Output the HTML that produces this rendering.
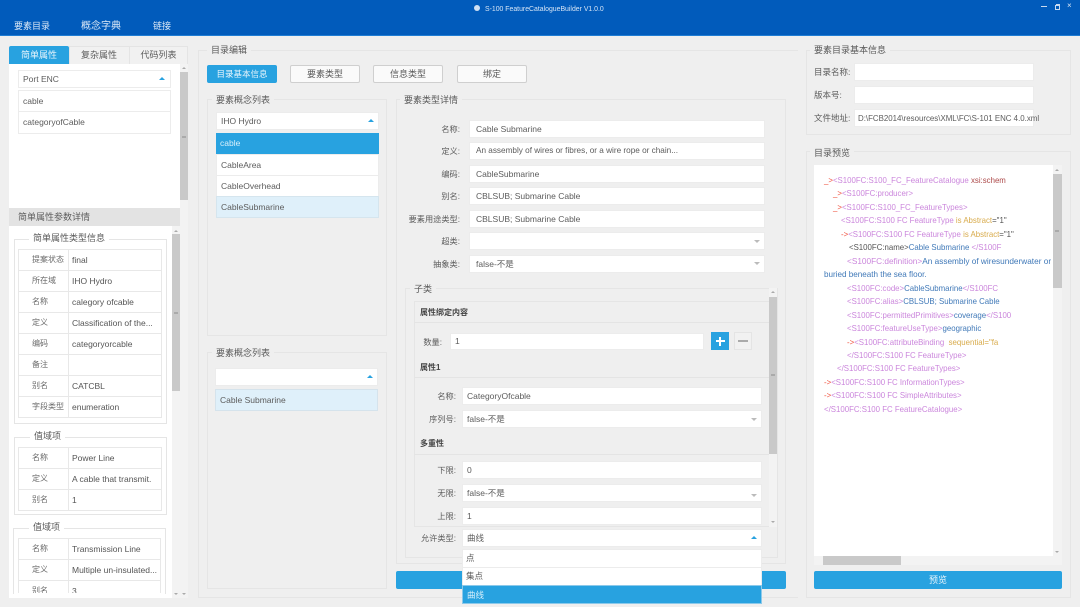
<!DOCTYPE html>
<html><head><meta charset="utf-8"><style>
html,body{margin:0;padding:0}
body{width:1080px;height:607px;overflow:hidden;background:#efefef}
#r{position:relative;width:1080px;height:607px;overflow:hidden;background:#efefef;font:8.5px/1 "Liberation Sans","Noto Sans CJK SC",sans-serif;color:#5c5c5c;filter:blur(.35px)}
#r div,#r span.a{position:absolute;box-sizing:border-box;white-space:nowrap}
.f{border:1px solid #e5e5e5}
.l{background:#efefef;padding:0 4px;height:10px;line-height:10px;font-size:9px;color:#5a5a5a}
.w{background:#fff}
.i{background:#fff;border:1px solid #ececec;padding-left:6px;color:#5c5c5c}
.t{text-align:right;color:#5c5c5c;font-size:8.2px;padding-top:1px}
.b{background:#28a2e0;color:#e8f5fc;text-align:center;border-radius:2px;font-size:9px}
.o{background:#fafafa;border:1px solid #cfcfcf;text-align:center;border-radius:2px;font-size:9px;color:#5a5a5a}
.u{width:0;height:0;border-left:3px solid transparent;border-right:3px solid transparent;border-bottom:3px solid #28a2e0}
.d{width:0;height:0;border-left:3px solid transparent;border-right:3px solid transparent;border-top:3px solid #bbb}
.su{width:0;height:0;border-left:2px solid transparent;border-right:2px solid transparent;border-bottom:2px solid #aaa}
.sd{width:0;height:0;border-left:2px solid transparent;border-right:2px solid transparent;border-top:2px solid #aaa}
.tr{background:#f3f3f3}.th{background:#c9c9c9}
.g{background:#aaa;height:2px;width:4px}
.h{color:#444;background:transparent;font-size:8px;font-weight:bold}
.hr{background:#e4e4e4;height:1px}
table{position:absolute;border-collapse:collapse;table-layout:fixed;background:#fff;font-size:8.5px;color:#5c5c5c}
td{border:1px solid #e8e8e8;padding:0;height:20px;white-space:nowrap;overflow:hidden}
td:first-child{width:50px;text-align:left;padding-left:13px;box-sizing:border-box;color:#6a6a6a;font-size:8px}
td:last-child{padding-left:3px;color:#555}
.x{left:0;height:13px;line-height:13px;font-size:7.85px}
.p{color:#cb86dc}.r{color:#f0503c}.y{color:#d8ab4c}.c{color:#4079b8}.k{color:#555}.m{color:#ad4a4a}
</style></head><body><div id="r">

<!-- header -->
<div style="left:0;top:0;width:1080px;height:36px;background:#015bbb;border-bottom:1px solid #1f7dd4"></div>
<div style="left:474px;top:5px;width:6px;height:6px;border-radius:50%;background:#cfe0f3"></div>
<div style="left:485px;top:5px;height:9px;line-height:9px;font-size:6.9px;color:#d6e5f6">S-100 FeatureCatalogueBuilder V1.0.0</div>
<div style="left:14px;top:21px;height:11px;line-height:11px;font-size:9px;color:#dbe8f6">要素目录</div>
<div style="left:81px;top:21px;height:11px;line-height:11px;font-size:10px;color:#dbe8f6">概念字典</div>
<div style="left:153px;top:21px;height:11px;line-height:11px;font-size:9px;color:#dbe8f6">链接</div>
<div style="left:1041px;top:6px;width:6px;height:1px;background:#c8daf0"></div>
<div style="left:1056px;top:4px;width:4px;height:4px;border:1px solid #c8daf0"></div>
<div style="left:1055px;top:5px;width:5px;height:5px;border:1px solid #c8daf0;background:#015bbb"></div>
<div style="left:1067px;top:2px;height:8px;line-height:8px;font-size:8px;color:#d5e4f5">×</div>

<!-- left tabs -->
<div style="left:69px;top:46px;width:119px;height:18px;border:1px solid #e4e4e4;border-bottom:0;background:#f1f1f1"></div>
<div style="left:129px;top:46px;width:1px;height:18px;background:#e4e4e4"></div>
<div class="b" style="left:9px;top:46px;width:60px;height:18px;line-height:18px;border-radius:2px 2px 0 0">简单属性</div>
<div style="left:69px;top:46px;width:60px;height:18px;line-height:18px;text-align:center;font-size:9px">复杂属性</div>
<div style="left:129px;top:46px;width:59px;height:18px;line-height:18px;text-align:center;font-size:9px">代码列表</div>

<div class="w" style="left:9px;top:64px;width:171px;height:144px"></div>
<div class="tr" style="left:180px;top:64px;width:8px;height:534px"></div>
<div class="su" style="left:182px;top:67px"></div>
<div class="th" style="left:180px;top:72px;width:8px;height:128px"></div>
<div class="g" style="left:182px;top:136px"></div>
<div class="i" style="left:18px;top:70px;width:153px;height:18px;line-height:16px;padding-left:4px">Port ENC</div>
<div class="u" style="left:159px;top:77px"></div>
<div class="i" style="left:18px;top:90px;width:153px;height:22px;line-height:20px;padding-left:4px">cable</div>
<div class="i" style="left:18px;top:111px;width:153px;height:23px;line-height:21px;padding-left:4px">categoryofCable</div>

<div style="left:9px;top:208px;width:171px;height:18px;line-height:18px;background:#e3e3e3;padding-left:9px;font-size:9px">简单属性参数详情</div>
<div class="w" style="left:9px;top:226px;width:163px;height:372px"></div>
<div class="tr" style="left:172px;top:226px;width:8px;height:372px"></div>
<div class="su" style="left:174px;top:230px"></div>
<div class="th" style="left:172px;top:234px;width:8px;height:157px"></div>
<div class="g" style="left:174px;top:312px"></div>
<div class="sd" style="left:174px;top:593px"></div>
<div class="sd" style="left:182px;top:593px"></div>

<div class="f" style="left:14px;top:239px;width:153px;height:185px"></div>
<div class="l" style="left:29px;top:233px;background:#fff">简单属性类型信息</div>
<table style="left:18px;top:249px;width:144px">
<tr><td>提案状态</td><td>final</td></tr>
<tr><td>所在域</td><td>IHO Hydro</td></tr>
<tr><td>名称</td><td>calegory ofcable</td></tr>
<tr><td>定义</td><td>Classification of the...</td></tr>
<tr><td>编码</td><td>categoryorcable</td></tr>
<tr><td>备注</td><td></td></tr>
<tr><td>别名</td><td>CATCBL</td></tr>
<tr><td>字段类型</td><td>enumeration</td></tr>
</table>

<div class="f" style="left:14px;top:437px;width:153px;height:78px"></div>
<div class="l" style="left:30px;top:431px;background:#fff">值域项</div>
<table style="left:18px;top:447px;width:144px">
<tr><td>名称</td><td>Power Line</td></tr>
<tr><td>定义</td><td>A cable that transmit.</td></tr>
<tr><td>别名</td><td>1</td></tr>
</table>

<div class="f" style="left:13px;top:528px;width:153px;height:66px;border-bottom:0"></div>
<div class="l" style="left:29px;top:522px;background:#fff">值域项</div>
<div style="left:13px;top:538px;width:150px;height:55px;overflow:hidden">
<table style="left:5px;top:0;width:143px">
<tr><td>名称</td><td>Transmission Line</td></tr>
<tr><td>定义</td><td>Multiple un-insulated...</td></tr>
<tr><td>别名</td><td>3</td></tr>
</table></div>

<!-- middle -->
<div class="f" style="left:198px;top:50px;width:600px;height:548px;border-right:0"></div>
<div class="l" style="left:207px;top:45px">目录编辑</div>
<div class="b" style="left:207px;top:65px;width:70px;height:18px;line-height:18px;font-size:8.5px">目录基本信息</div>
<div class="o" style="left:290px;top:65px;width:70px;height:18px;line-height:16px">要素类型</div>
<div class="o" style="left:373px;top:65px;width:70px;height:18px;line-height:16px">信息类型</div>
<div class="o" style="left:457px;top:65px;width:70px;height:18px;line-height:16px">绑定</div>

<div class="f" style="left:207px;top:99px;width:180px;height:237px"></div>
<div class="l" style="left:212px;top:95px">要素概念列表</div>
<div class="i" style="left:216px;top:112px;width:163px;height:18px;line-height:16px;padding-left:4px">IHO Hydro</div>
<div class="u" style="left:368px;top:119px"></div>
<div style="left:216px;top:133px;width:163px;height:21px;line-height:21px;background:#28a2e0;color:#d9f0fb;padding-left:4px">cable</div>
<div class="i" style="left:216px;top:154px;width:163px;height:22px;line-height:20px;padding-left:4px">CableArea</div>
<div class="i" style="left:216px;top:175px;width:163px;height:22px;line-height:20px;padding-left:4px">CableOverhead</div>
<div class="i" style="left:216px;top:196px;width:163px;height:22px;line-height:20px;padding-left:4px;background:#dff0fa;border-color:#d5e5ee">CableSubmarine</div>

<div class="f" style="left:207px;top:352px;width:180px;height:237px"></div>
<div class="l" style="left:212px;top:348px">要素概念列表</div>
<div class="i" style="left:215px;top:368px;width:163px;height:18px"></div>
<div class="u" style="left:367px;top:375px"></div>
<div class="i" style="left:215px;top:389px;width:163px;height:22px;line-height:20px;padding-left:4px;background:#dff0fa;border-color:#d5e3ec">Cable Submarine</div>

<div class="f" style="left:396px;top:99px;width:390px;height:465px"></div>
<div class="l" style="left:400px;top:95px">要素类型详情</div>
<div class="t" style="left:400px;top:120px;width:60px;height:18px;line-height:18px">名称:</div>
<div class="i" style="left:469px;top:120px;width:296px;height:18px;line-height:16px">Cable Submarine</div>
<div class="t" style="left:400px;top:142px;width:60px;height:18px;line-height:18px">定义:</div>
<div class="i" style="left:469px;top:142px;width:296px;height:18px;line-height:16px;font-size:8.2px">An assembly of wires or fibres, or a wire rope or chain...</div>
<div class="t" style="left:400px;top:165px;width:60px;height:18px;line-height:18px">编码:</div>
<div class="i" style="left:469px;top:165px;width:296px;height:18px;line-height:16px">CableSubmarine</div>
<div class="t" style="left:400px;top:187px;width:60px;height:18px;line-height:18px">别名:</div>
<div class="i" style="left:469px;top:187px;width:296px;height:18px;line-height:16px">CBLSUB; Submarine Cable</div>
<div class="t" style="left:400px;top:210px;width:60px;height:18px;line-height:18px">要素用途类型:</div>
<div class="i" style="left:469px;top:210px;width:296px;height:18px;line-height:16px">CBLSUB; Submarine Cable</div>
<div class="t" style="left:400px;top:232px;width:60px;height:18px;line-height:18px">超类:</div>
<div class="i" style="left:469px;top:232px;width:296px;height:18px"></div>
<div class="d" style="left:754px;top:240px"></div>
<div class="t" style="left:400px;top:255px;width:60px;height:18px;line-height:18px">抽象类:</div>
<div class="i" style="left:469px;top:255px;width:296px;height:18px;line-height:16px">false-不是</div>
<div class="d" style="left:754px;top:262px"></div>

<div class="f" style="left:405px;top:288px;width:373px;height:270px"></div>
<div class="l" style="left:410px;top:284px">子类</div>
<div class="tr" style="left:769px;top:288px;width:8px;height:239px"></div>
<div class="su" style="left:771px;top:291px"></div>
<div class="th" style="left:769px;top:297px;width:8px;height:157px"></div>
<div class="g" style="left:771px;top:374px"></div>
<div class="sd" style="left:771px;top:521px"></div>
<div style="left:414px;top:301px;width:355px;height:226px;border:1px solid #e5e5e5;border-right:0"></div>
<div class="h" style="left:420px;top:308px;height:10px;line-height:10px">属性绑定内容</div>
<div class="hr" style="left:414px;top:322px;width:355px"></div>
<div class="t" style="left:415px;top:333px;width:27px;height:17px;line-height:17px">数量:</div>
<div class="i" style="left:450px;top:333px;width:254px;height:17px;line-height:15px;padding-left:4px">1</div>
<div style="left:711px;top:332px;width:18px;height:18px;background:#28a2e0"></div>
<div style="left:716px;top:340px;width:9px;height:2px;background:#fff"></div>
<div style="left:719px;top:337px;width:2px;height:9px;background:#fff"></div>
<div style="left:734px;top:332px;width:18px;height:18px;background:#f1f1f1;border:1px solid #e4e4e4"></div>
<div style="left:738px;top:340px;width:10px;height:2px;background:#aaa"></div>
<div class="h" style="left:420px;top:363px;height:10px;line-height:10px">属性1</div>
<div class="hr" style="left:414px;top:377px;width:355px"></div>
<div class="t" style="left:415px;top:387px;width:41px;height:18px;line-height:18px">名称:</div>
<div class="i" style="left:462px;top:387px;width:300px;height:18px;line-height:16px;padding-left:4px">CategoryOfcable</div>
<div class="t" style="left:415px;top:410px;width:41px;height:18px;line-height:18px">序列号:</div>
<div class="i" style="left:462px;top:410px;width:300px;height:18px;line-height:16px;padding-left:4px">false-不是</div>
<div class="d" style="left:751px;top:418px"></div>
<div class="h" style="left:420px;top:439px;height:10px;line-height:10px">多重性</div>
<div class="hr" style="left:414px;top:454px;width:355px"></div>
<div class="t" style="left:415px;top:461px;width:41px;height:18px;line-height:18px">下限:</div>
<div class="i" style="left:462px;top:461px;width:300px;height:18px;line-height:16px;padding-left:4px">0</div>
<div class="t" style="left:415px;top:484px;width:41px;height:18px;line-height:18px">无限:</div>
<div class="i" style="left:462px;top:484px;width:300px;height:18px;line-height:16px;padding-left:4px">false-不是</div>
<div class="d" style="left:751px;top:494px"></div>
<div class="t" style="left:415px;top:507px;width:41px;height:18px;line-height:18px">上限:</div>
<div class="i" style="left:462px;top:507px;width:300px;height:18px;line-height:16px;padding-left:4px">1</div>
<div class="t" style="left:415px;top:529px;width:41px;height:18px;line-height:18px">允许类型:</div>
<div class="i" style="left:462px;top:529px;width:300px;height:18px;line-height:16px;padding-left:4px">曲线</div>
<div class="u" style="left:751px;top:536px"></div>

<div class="b" style="left:396px;top:571px;width:390px;height:18px"></div>
<div class="i" style="left:462px;top:549px;width:300px;height:19px;line-height:17px;padding-left:3px">点</div>
<div class="i" style="left:462px;top:567px;width:300px;height:19px;line-height:17px;padding-left:3px">集点</div>
<div style="left:462px;top:585px;width:300px;height:19px;line-height:18px;padding-left:4px;background:#28a2e0;color:#d9f0fb;border:1px solid #8cc9ea">曲线</div>

<!-- right -->
<div class="f" style="left:806px;top:50px;width:265px;height:85px"></div>
<div class="l" style="left:810px;top:45px">要素目录基本信息</div>
<div style="left:814px;top:63px;height:18px;line-height:18px">目录名称:</div>
<div class="i" style="left:854px;top:63px;width:180px;height:18px"></div>
<div style="left:814px;top:86px;height:18px;line-height:18px">版本号:</div>
<div class="i" style="left:854px;top:86px;width:180px;height:18px"></div>
<div style="left:814px;top:109px;height:18px;line-height:18px">文件地址:</div>
<div class="i" style="left:854px;top:109px;width:180px;height:18px;line-height:17px;padding-left:3px;font-size:7.9px">D:\FCB2014\resources\XML\FC\S-101 ENC 4.0.xml</div>

<div class="f" style="left:806px;top:151px;width:265px;height:447px"></div>
<div class="l" style="left:810px;top:148px">目录预览</div>
<div class="w" style="left:814px;top:165px;width:239px;height:391px;overflow:hidden">
<div class="x" style="left:10px;top:9px"><span class="r">_&gt;</span><span class="p">&lt;S100FC:S100_FC_FeatureCatalogue</span> <span class="m">xsi:schem</span></div>
<div class="x" style="left:19px;top:22px"><span class="r">_&gt;</span><span class="p">&lt;S100FC:producer&gt;</span></div>
<div class="x" style="left:19px;top:36px"><span class="r">_&gt;</span><span class="p">&lt;S100FC:S100_FC_FeatureTypes&gt;</span></div>
<div class="x" style="left:27px;top:49px"><span class="p">&lt;S100FC:S100 FC FeatureType</span> <span class="y">is Abstract</span><span class="k">="1"</span></div>
<div class="x" style="left:27px;top:63px"><span class="r">-&gt;</span><span class="p">&lt;S100FC:S100 FC FeatureType</span> <span class="y">is Abstract</span><span class="k">="1"</span></div>
<div class="x" style="left:35px;top:76px"><span class="k">&lt;S100FC:name&gt;</span><span class="c">Cable Submarine</span> <span class="p">&lt;/S100F</span></div>
<div class="x" style="left:33px;top:90px;font-size:8.25px"><span class="p">&lt;S100FC:definition&gt;</span><span class="c">An assembly of wiresunderwater or</span></div>
<div class="x" style="left:10px;top:103px;font-size:8.1px"><span class="c">buried beneath the sea floor.</span></div>
<div class="x" style="left:33px;top:117px"><span class="p">&lt;S100FC:code&gt;</span><span class="c">CableSubmarine</span><span class="p">&lt;/S100FC</span></div>
<div class="x" style="left:33px;top:130px"><span class="p">&lt;S100FC:alias&gt;</span><span class="c">CBLSUB; Submarine Cable</span></div>
<div class="x" style="left:33px;top:144px"><span class="p">&lt;S100FC:permittedPrimitives&gt;</span><span class="c">coverage</span><span class="p">&lt;/S100</span></div>
<div class="x" style="left:33px;top:157px"><span class="p">&lt;S100FC:featureUseType&gt;</span><span class="c">geographic</span></div>
<div class="x" style="left:33px;top:171px"><span class="r">-&gt;</span><span class="p">&lt;S100FC:attributeBinding</span> &nbsp;<span class="y">sequential="fa</span></div>
<div class="x" style="left:33px;top:184px"><span class="p">&lt;/S100FC:S100 FC FeatureType&gt;</span></div>
<div class="x" style="left:23px;top:197px"><span class="p">&lt;/S100FC:S100 FC FeatureTypes&gt;</span></div>
<div class="x" style="left:10px;top:211px"><span class="r">-&gt;</span><span class="p">&lt;S100FC:S100 FC InformationTypes&gt;</span></div>
<div class="x" style="left:10px;top:224px"><span class="r">-&gt;</span><span class="p">&lt;S100FC:S100 FC SimpleAttributes&gt;</span></div>
<div class="x" style="left:10px;top:238px"><span class="p">&lt;/S100FC:S100 FC FeatureCatalogue&gt;</span></div>
</div>
<div class="tr" style="left:1053px;top:165px;width:9px;height:391px"></div>
<div class="su" style="left:1055px;top:169px"></div>
<div class="th" style="left:1053px;top:174px;width:9px;height:114px"></div>
<div class="g" style="left:1055px;top:230px"></div>
<div class="sd" style="left:1055px;top:551px"></div>
<div class="tr" style="left:814px;top:556px;width:248px;height:9px"></div>
<div class="th" style="left:823px;top:556px;width:78px;height:9px"></div>
<div class="b" style="left:814px;top:571px;width:248px;height:18px;line-height:18px">预览</div>

</div></body></html>
